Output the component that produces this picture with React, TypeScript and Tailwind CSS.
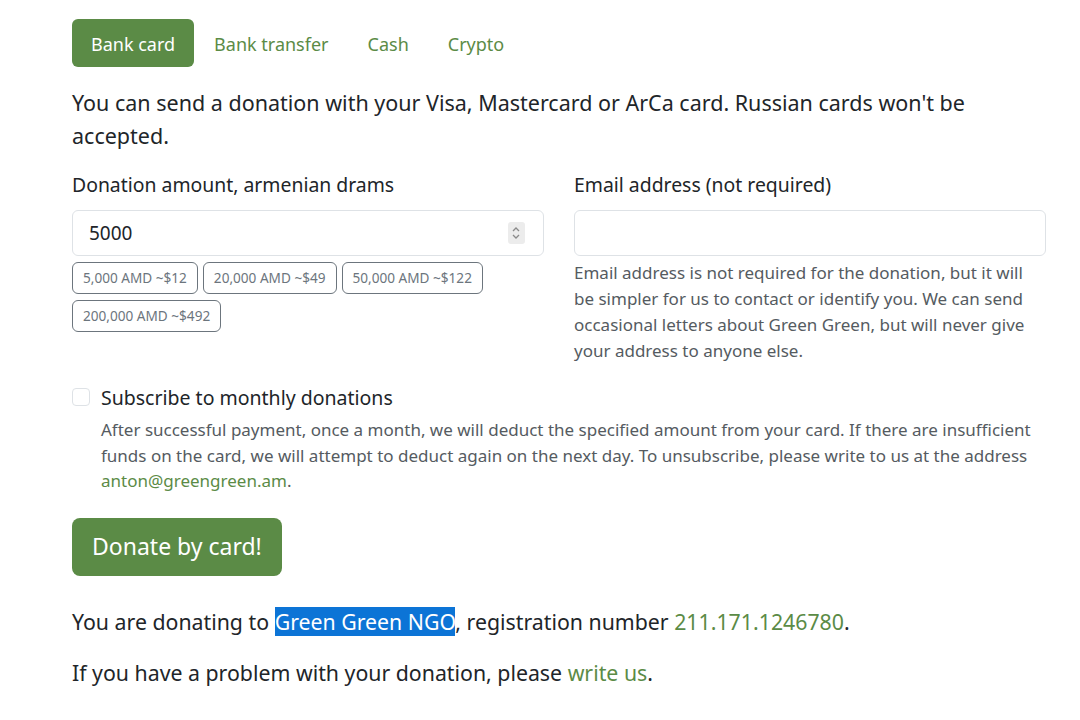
import { useState } from "react";

const amounts = ["5,000 AMD ~$12", "20,000 AMD ~$49", "50,000 AMD ~$122", "200,000 AMD ~$492"];
const tabs = ["Bank card", "Bank transfer", "Cash", "Crypto"];

function Spinner() {
  return (
    <span className="flex h-[22px] w-[18px] items-center justify-center rounded-[3px] bg-[#ececec]">
      <svg width="10" height="16" viewBox="0 0 10 16" fill="none" stroke="#8a8a8a" strokeWidth="1.3">
        <path d="M2 6l3-3 3 3" />
        <path d="M2 10l3 3 3-3" />
      </svg>
    </span>
  );
}

export default function App() {
  const [active, setActive] = useState(0);
  const [amount, setAmount] = useState("5000");

  return (
    <div className="min-h-[720px] w-[1080px] bg-white text-[#212529]" style={{ fontFamily: '"Noto Sans", "Open Sans", sans-serif' }}>
      <div className="w-[1046px] pl-[72px] pt-[19px]">
        <nav className="flex gap-[1px]">
          {tabs.map((t, i) => (
            <button
              key={t}
              onClick={() => setActive(i)}
              className={
                i === active
                  ? "h-12 rounded-md bg-[#5b8b46] px-[19px] pt-[3px] text-[18px] text-white"
                  : "h-12 rounded-md px-[19px] pt-[3px] text-[18px] text-[#5b8b46]"
              }
            >
              {t}
            </button>
          ))}
        </nav>

        <p className="mt-[19px] text-[21.5px] leading-[33px]">
          You can send a donation with your Visa, Mastercard or ArCa card. Russian cards won't be accepted.
        </p>

        <div className="mt-[18px] grid grid-cols-2 gap-[30px]">
          <div>
            <label className="block text-[19.4px] leading-[30px]">Donation amount, armenian drams</label>
            <div className="mt-[10px] flex h-[46px] items-center justify-between rounded-md border border-[#dee2e6] pl-4 pr-[18px]">
              <input
                value={amount}
                onChange={(e) => setAmount(e.target.value)}
                className="w-full text-[19px] outline-none"
              />
              <Spinner />
            </div>
            <div className="mt-[6px] flex flex-wrap gap-x-[5px] gap-y-[6px]">
              {amounts.map((a) => (
                <button
                  key={a}
                  onClick={() => setAmount(a.split(" ")[0].replace(/,/g, ""))}
                  className="h-[32px] rounded-md border border-[#6c757d] px-[10px] text-[13.6px] text-[#6c757d]"
                >
                  {a}
                </button>
              ))}
            </div>
          </div>

          <div>
            <label className="block text-[19.4px] leading-[30px]">Email address (not required)</label>
            <input className="mt-[10px] block h-[46px] w-full rounded-md border border-[#dee2e6] px-4 text-[18px] outline-none" />
            <p className="mt-[4px] text-[17px] leading-[26px] text-[#555b61]">
              Email address is not required for the donation, but it will be simpler for us to contact or identify you. We can send occasional letters about Green Green, but will never give your address to anyone else.
            </p>
          </div>
        </div>

        <div className="mt-[20px] flex gap-[11px]">
          <input type="checkbox" className="mt-[4px] h-[18px] w-[18px] shrink-0 appearance-none rounded-[4px] border border-[#dee2e6]" />
          <div>
            <div className="text-[19.5px] leading-[28px]">Subscribe to monthly donations</div>
            <p className="mt-[5px] text-[17px] leading-[25.5px] text-[#555b61]">
              After successful payment, once a month, we will deduct the specified amount from your card. If there are insufficient funds on the card, we will attempt to deduct again on the next day. To unsubscribe, please write to us at the address{" "}
              <a href="#" className="text-[#5b8b46]">anton@greengreen.am</a>.
            </p>
          </div>
        </div>

        <button className="mt-[24px] h-[58px] rounded-lg bg-[#5b8b46] px-5 text-[23px] text-white">Donate by card!</button>

        <p className="mt-[31px] text-[21.3px] leading-[30px]">
          You are donating to <span className="bg-[#0c74d6] text-white">Green Green NGO</span>, registration number{" "}
          <a href="#" className="text-[#5b8b46]">211.171.1246780</a>.
        </p>
        <p className="mt-[21px] text-[21.3px] leading-[30px]">
          If you have a problem with your donation, please <a href="#" className="text-[#5b8b46]">write us</a>.
        </p>
      </div>
    </div>
  );
}
